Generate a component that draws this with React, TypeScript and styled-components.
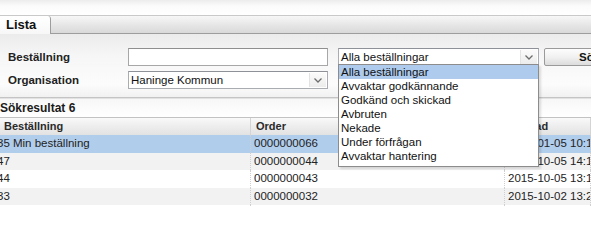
import React from "react";
import styled, { createGlobalStyle } from "styled-components";

const GlobalStyle = createGlobalStyle`
  html, body {
    margin: 0;
    padding: 0;
    background: #ffffff;
  }
  body {
    font-family: "Liberation Sans", Arial, sans-serif;
    font-size: 11px;
    color: #1e1e1e;
  }
`;

const statuses = [
  "Alla beställningar",
  "Avvaktar godkännande",
  "Godkänd och skickad",
  "Avbruten",
  "Nekade",
  "Under förfrågan",
  "Avvaktar hantering",
];

const rows = [
  { name: "35 Min beställning", order: "0000000066", date: "2016-01-05 10:18" },
  { name: "47", order: "0000000044", date: "2015-10-05 14:13" },
  { name: "44", order: "0000000043", date: "2015-10-05 13:17" },
  { name: "33", order: "0000000032", date: "2015-10-02 13:27" },
  { name: "31", order: "0000000031", date: "2015-10-01 09:12" },
];

const Chevron = () => (
  <svg width="8" height="5" viewBox="0 0 8 5">
    <polyline
      points="0.5,0.5 4,4 7.5,0.5"
      fill="none"
      stroke="#6d6d6d"
      strokeWidth="1.3"
    />
  </svg>
);

const App = () => {
  return (
    <Page>
      <GlobalStyle />
      <TopGap />
      <TabStrip>
        <Tab>Lista</Tab>
      </TabStrip>
      <FormPanel>
        <FormRow>
          <Label>Beställning</Label>
          <TextInput />
          <Combo $width={201} $gap={10}>
            <ComboText>Alla beställningar</ComboText>
            <Trigger>
              <Chevron />
            </Trigger>
          </Combo>
          <SearchButton>Sök</SearchButton>
        </FormRow>
        <FormRow>
          <Label>Organisation</Label>
          <Combo $width={200} $gap={0}>
            <ComboText>Haninge Kommun</ComboText>
            <Trigger>
              <Chevron />
            </Trigger>
          </Combo>
        </FormRow>
      </FormPanel>
      <ResultsTitle>Sökresultat 6</ResultsTitle>
      <Grid>
        <HeaderCell>Beställning</HeaderCell>
        <HeaderCell>Order</HeaderCell>
        <HeaderCell>Skapad</HeaderCell>
        {rows.map((row, index) => (
          <React.Fragment key={row.order}>
            <Cell $row={index} $clip>
              {row.name}
            </Cell>
            <Cell $row={index}>{row.order}</Cell>
            <Cell $row={index}>{row.date}</Cell>
          </React.Fragment>
        ))}
      </Grid>
      <DropList>
        {statuses.map((status, index) => (
          <DropItem key={status} $active={index === 0}>
            {status}
          </DropItem>
        ))}
      </DropList>
    </Page>
  );
};

const Page = styled.div`
  position: relative;
  width: 591px;
  height: 207px;
  overflow: hidden;
  background: #ffffff;
`;

const TopGap = styled.div`
  height: 15px;
  background: linear-gradient(#ececec, #fbfbfb 40%, #ffffff);
`;

const TabStrip = styled.div`
  display: flex;
  height: 17px;
  border-top: 1px solid #c9c9c9;
  border-bottom: 1px solid #9d9d9d;
  background: linear-gradient(#f7f7f7, #e4e4e4 60%, #d9d9d9);
`;

const Tab = styled.div`
  width: 44px;
  height: 18px;
  padding-left: 6px;
  background: linear-gradient(#ffffff, #f7f7f7);
  border-right: 1px solid #9d9d9d;
  border-top-right-radius: 3px;
  font-size: 13px;
  font-weight: bold;
  line-height: 17px;
  color: #111111;
`;

const FormPanel = styled.div`
  display: flex;
  flex-direction: column;
  gap: 5px;
  height: 49px;
  padding: 14px 0 0;
  background: linear-gradient(#ebebeb, #f6f6f6 35%, #fcfcfc 80%, #f1f1f1);
  border-bottom: 1px solid #c4c4c4;
  box-shadow: 0 1px 1px #e2e2e2;
`;

const FormRow = styled.div`
  display: flex;
  align-items: center;
  height: 18px;
  & > * {
    flex-shrink: 0;
  }
`;

const Label = styled.div`
  width: 120px;
  padding-left: 8px;
  font-size: 11.5px;
  font-weight: bold;
  color: #222222;
`;

const TextInput = styled.div`
  width: 198px;
  height: 16px;
  border: 1px solid #a7a7a7;
  border-top-color: #8f8f8f;
  background: #ffffff;
`;

const Combo = styled.div<{ $width: number; $gap: number }>`
  display: flex;
  align-items: center;
  width: ${(p) => p.$width - 2}px;
  height: 16px;
  margin-left: ${(p) => p.$gap}px;
  border: 1px solid #a9acb1;
  border-top-color: #8e9298;
  background: #ffffff;
`;

const ComboText = styled.div`
  flex: 1;
  padding-left: 2px;
  font-size: 11.5px;
  line-height: 16px;
  color: #111111;
  white-space: nowrap;
  overflow: hidden;
`;

const Trigger = styled.div`
  display: flex;
  align-items: center;
  justify-content: center;
  width: 16px;
  height: 14px;
  margin-right: 1px;
  background: linear-gradient(#fbfbfb, #ececec);
  border-left: 1px solid #e3e3e3;
`;

const SearchButton = styled.div`
  width: 76px;
  height: 16px;
  margin-left: 5px;
  padding-left: 34px;
  border: 1px solid #9a9a9a;
  border-radius: 2px;
  background: linear-gradient(#fdfdfd, #f1f1f1 50%, #dcdcdc);
  font-size: 11.5px;
  font-weight: bold;
  line-height: 16px;
  color: #111111;
`;

const ResultsTitle = styled.div`
  height: 18px;
  margin-top: 1px;
  border-bottom: 1px solid #c2c2c2;
  background: linear-gradient(#f7f7f7, #ffffff);
  font-size: 12px;
  font-weight: bold;
  line-height: 19px;
  color: #1a1a1a;
`;

const Grid = styled.div`
  display: grid;
  grid-template-columns: 251px 254px 1fr;
  grid-auto-rows: 17.4px;
`;

const HeaderCell = styled.div`
  height: 17px;
  padding-left: 5px;
  border-right: 1px solid #d4d4d4;
  border-bottom: 1px solid #a8a8a8;
  background: linear-gradient(#f9f9f9, #ededed 50%, #e2e2e2);
  font-size: 11px;
  font-weight: bold;
  line-height: 17px;
  color: #2a2a2a;
  white-space: nowrap;
  overflow: hidden;
  &:nth-child(1),
  &:nth-child(3) {
    padding-left: 4px;
  }
`;

const Cell = styled.div<{ $row: number; $clip?: boolean }>`
  padding-left: 3px;
  border-right: 1px dotted #cfcfcf;
  background: ${(p) =>
    p.$row === 0 ? "#b1cdec" : p.$row % 2 === 1 ? "#f2f2f2" : "#ffffff"};
  font-size: 11.5px;
  line-height: 17px;
  color: #222222;
  white-space: nowrap;
  overflow: hidden;
  text-indent: ${(p) => (p.$clip ? "-6px" : "0")};
`;

const DropList = styled.div`
  position: absolute;
  left: 338px;
  top: 64px;
  width: 199px;
  padding-bottom: 3px;
  border: 1px solid #8c8c8c;
  background: #ffffff;
  box-shadow: 2px 2px 2px rgba(0, 0, 0, 0.12);
`;

const DropItem = styled.div<{ $active: boolean }>`
  height: 14px;
  padding-left: 2px;
  background: ${(p) => (p.$active ? "#aecbee" : "transparent")};
  font-size: 11.5px;
  line-height: 14px;
  color: #111111;
  white-space: nowrap;
`;

export default App;
